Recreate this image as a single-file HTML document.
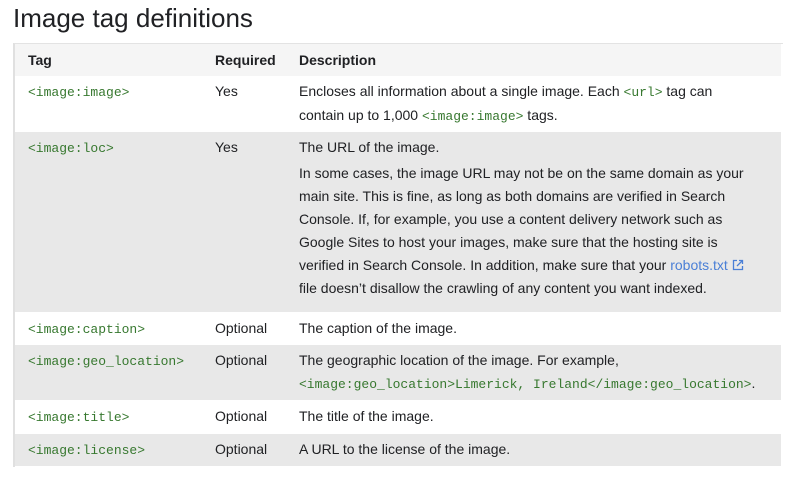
<!DOCTYPE html>
<html><head><meta charset="utf-8"><style>
body{margin:0;width:796px;height:480px;background:#fff;overflow:hidden;font-family:"Liberation Sans",Arial,sans-serif;color:#202124;position:relative}
h1{position:absolute;left:13px;top:2px;margin:0;font-weight:400;font-size:26px;line-height:32px;color:#202124}
.tbl{position:absolute;left:13px;top:43px;width:768px;height:423px;border-left:2px solid #e0e0e0;border-top:1px solid #e3e3e3}
.r{position:absolute;left:15px;width:766px;font-size:14px;line-height:23px}
.r div{position:absolute;white-space:nowrap}
.c1{left:13px}.c2{left:200px}.c3{left:284px}
.g{background:#e8e8e8}
.h{background:#f5f5f5;font-weight:700}
code{font-family:"Liberation Mono","Courier New",monospace;font-size:13px;color:#37782f}
a{color:#4a7fd6;text-decoration:none}
</style></head><body>
<h1>Image tag definitions</h1>
<div class="tbl"></div>
<div class="r h" style="top:44px;height:32px"><div class="c1" style="top:5px">Tag</div><div class="c2" style="top:5px">Required</div><div class="c3" style="top:5px">Description</div></div>
<div class="r" style="top:76px;height:56px"><div class="c1" style="top:4px"><code>&lt;image:image&gt;</code></div><div class="c2" style="top:4px">Yes</div><div class="c3" style="top:4px">Encloses all information about a single image. Each <code>&lt;url&gt;</code> tag can<br>contain up to 1,000 <code>&lt;image:image&gt;</code> tags.</div></div>
<div class="r g" style="top:132px;height:180px"><div class="c1" style="top:4px"><code>&lt;image:loc&gt;</code></div><div class="c2" style="top:4px">Yes</div><div class="c3" style="top:4px">The URL of the image.<div style="position:static;margin-top:3px">In some cases, the image URL may not be on the same domain as your<br>main site. This is fine, as long as both domains are verified in Search<br>Console. If, for example, you use a content delivery network such as<br>Google Sites to host your images, make sure that the hosting site is<br>verified in Search Console. In addition, make sure that your <a>robots.txt <svg width="12" height="12" viewBox="0 0 12 12" style="vertical-align:-1px"><path d="M5 1.5H1.5v9h9V7M7 1.5h3.5V5M10.5 1.5L5 7" fill="none" stroke="#4a7fd6" stroke-width="1.3"/></svg></a><br>file doesn’t disallow the crawling of any content you want indexed.</div></div></div>
<div class="r" style="top:312px;height:33px"><div class="c1" style="top:5px"><code>&lt;image:caption&gt;</code></div><div class="c2" style="top:5px">Optional</div><div class="c3" style="top:5px">The caption of the image.</div></div>
<div class="r g" style="top:345px;height:55px"><div class="c1" style="top:4px"><code>&lt;image:geo_location&gt;</code></div><div class="c2" style="top:4px">Optional</div><div class="c3" style="top:4px">The geographic location of the image. For example,<br><code>&lt;image:geo_location&gt;Limerick, Ireland&lt;/image:geo_location&gt;</code>.</div></div>
<div class="r" style="top:400px;height:34px"><div class="c1" style="top:5px"><code>&lt;image:title&gt;</code></div><div class="c2" style="top:5px">Optional</div><div class="c3" style="top:5px">The title of the image.</div></div>
<div class="r g" style="top:434px;height:32px"><div class="c1" style="top:4px"><code>&lt;image:license&gt;</code></div><div class="c2" style="top:4px">Optional</div><div class="c3" style="top:4px">A URL to the license of the image.</div></div>
</body></html>
